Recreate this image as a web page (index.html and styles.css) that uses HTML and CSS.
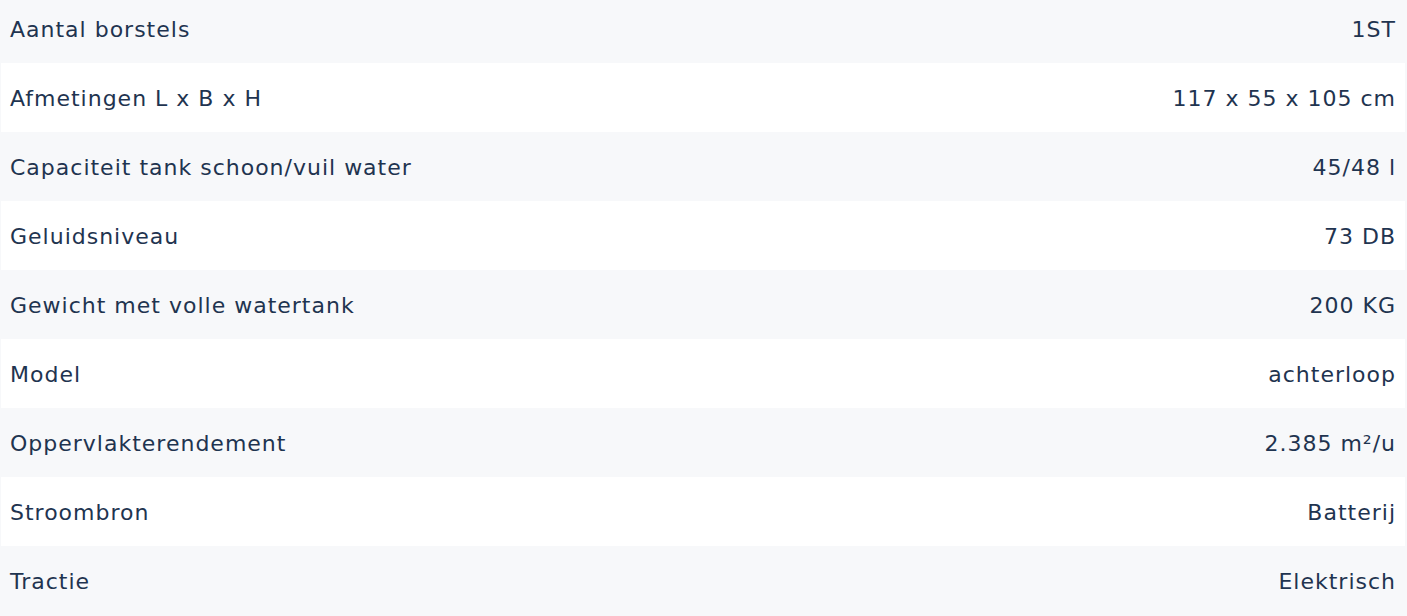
FILE: index.html
```html
<!DOCTYPE html>
<html lang="nl">
<head>
<meta charset="utf-8">
<title>Specificaties</title>
<link rel="stylesheet" href="styles.css">
</head>
<body>
<div class="specs">
  <div class="row"><span class="label">Aantal borstels</span><span class="value">1ST</span></div>
  <div class="row"><span class="label">Afmetingen L x B x H</span><span class="value">117 x 55 x 105 cm</span></div>
  <div class="row"><span class="label">Capaciteit tank schoon/vuil water</span><span class="value">45/48 l</span></div>
  <div class="row"><span class="label">Geluidsniveau</span><span class="value">73 DB</span></div>
  <div class="row"><span class="label">Gewicht met volle watertank</span><span class="value">200 KG</span></div>
  <div class="row"><span class="label">Model</span><span class="value">achterloop</span></div>
  <div class="row"><span class="label">Oppervlakterendement</span><span class="value">2.385 m²/u</span></div>
  <div class="row"><span class="label">Stroombron</span><span class="value">Batterij</span></div>
  <div class="row"><span class="label">Tractie</span><span class="value">Elektrisch</span></div>
</div>
</body>
</html>
```
FILE: styles.css
```css
html, body {
  margin: 0;
  padding: 0;
  background: #f7f8fa;
}
body {
  font-family: "DejaVu Sans", "Noto Sans", sans-serif;
  color: #1f3450;
  overflow: hidden;
}
.specs {
  display: flex;
  flex-direction: column;
  margin-top: -6px;
  background: #f7f8fa;
}
.row {
  display: flex;
  justify-content: space-between;
  align-items: center;
  box-sizing: border-box;
  height: 69px;
  margin: 0 2px 0 1px;
  padding: 2px 10px 0 9px;
  font-size: 22px;
  letter-spacing: 1px;
}
.value {
  margin-right: -1px;
}
.row:nth-child(even) {
  background: #ffffff;
}
```
